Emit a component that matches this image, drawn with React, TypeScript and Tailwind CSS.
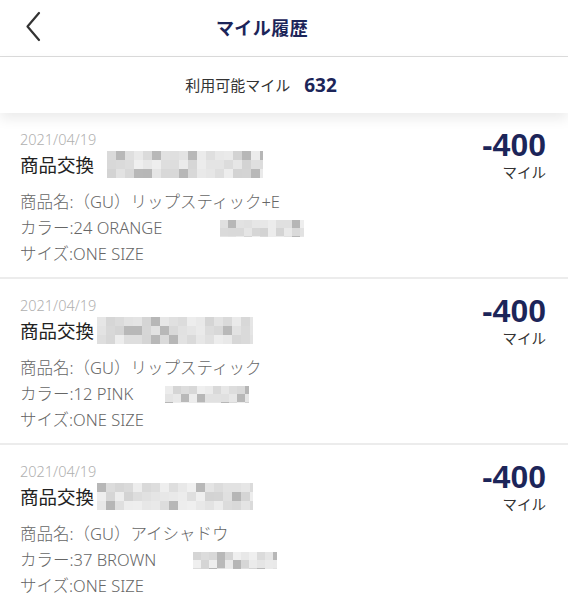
import React from "react";

const NAVY = "#1c2559";

const ITEMS = [
  {
    name: "商品名:（GU）リップスティック+E",
    color: "カラー:24 ORANGE",
    colorBlurX: 200,
    nameBlurX: 107,
    seed: 3,
  },
  {
    name: "商品名:（GU）リップスティック",
    color: "カラー:12 PINK",
    colorBlurX: 145,
    nameBlurX: 97,
    seed: 7,
  },
  {
    name: "商品名:（GU）アイシャドウ",
    color: "カラー:37 BROWN",
    colorBlurX: 173,
    nameBlurX: 97,
    seed: 11,
  },
];

// pixelated mosaic standing in for the redacted text
function Mosaic({ width, height, seed, cell = 9 }: { width: number; height: number; seed: number; cell?: number }) {
  const cols = Math.ceil(width / cell);
  const rows = Math.ceil(height / cell);
  const rects = [];
  let s = seed * 9301 + 49297;
  for (let r = 0; r < rows; r++) {
    for (let c = 0; c < cols; c++) {
      s = (s * 9301 + 49297) % 233280;
      const v = s / 233280;
      const g = Math.round(v > 0.85 ? 165 + v * 20 : 210 + v * 35);
      rects.push(
        <rect key={`${r}-${c}`} x={c * cell} y={r * cell} width={cell} height={cell} fill={`rgb(${g},${g},${g})`} />
      );
    }
  }
  return (
    <svg width={width} height={height} className="block" style={{ filter: "blur(0.6px)" }}>
      {rects}
    </svg>
  );
}

export default function App() {
  return (
    <div
      className="w-[568px] h-[600px] bg-white overflow-hidden"
      style={{ fontFamily: '"Noto Sans", "Noto Sans CJK JP", sans-serif' }}
    >
      {/* header */}
      <div className="relative h-[57px] flex items-center justify-center pr-[44px] border-b border-[#dcdcdc]">
        <svg className="absolute left-[24px] top-[11px]" width="20" height="31" viewBox="0 0 20 31" fill="none">
          <path d="M15 2 L3.5 15.5 L15 29" stroke="#333" strokeWidth="2.2" strokeLinecap="round" strokeLinejoin="round" />
        </svg>
        <h1 className="text-[18px] font-bold tracking-wide" style={{ color: NAVY }}>
          マイル履歴
        </h1>
      </div>

      {/* balance */}
      <div className="relative z-10 h-[56px] flex items-center justify-center pr-[46px] bg-white shadow-[0_6px_12px_rgba(0,0,0,0.08)]">
        <span className="text-[15px] text-[#333]">利用可能マイル</span>
        <span className="ml-[14px] text-[19px] font-bold" style={{ color: NAVY }}>
          632
        </span>
      </div>

      {/* history */}
      <div>
        {ITEMS.map((item, i) => (
          <div key={i} className="h-[166px] flex justify-between pl-[20px] pr-[20px] pt-[15px] border-b-2 border-[#ececec]">
            <div className="flex flex-col">
              <div className="text-[14.5px] leading-[22px] text-[#b0b0b0] font-light">2021/04/19</div>
              <div className="relative flex items-center h-[30px]">
                <span className="text-[18.5px] text-[#222]">商品交換</span>
                <div className="absolute top-[1px]" style={{ left: item.nameBlurX - 20 }}>
                  <Mosaic width={156} height={27} seed={item.seed} />
                </div>
              </div>
              <div className="mt-[9px] text-[16.5px] leading-[26px] text-[#666] font-light">
                <div>{item.name}</div>
                <div className="relative">
                  <span>{item.color}</span>
                  <div className="absolute top-[5px]" style={{ left: item.colorBlurX }}>
                    <Mosaic width={84} height={17} seed={item.seed + 5} cell={8} />
                  </div>
                </div>
                <div>サイズ:ONE SIZE</div>
              </div>
            </div>
            <div className="flex flex-col items-end pr-[2px]">
              <div
                className="text-[32px] font-bold leading-[33px] mt-[1px]"
                style={{ color: NAVY, fontFamily: '"Liberation Sans", sans-serif' }}
              >
                -400
              </div>
              <div className="text-[14.5px] text-[#333] leading-[18px] mt-[1px]">マイル</div>
            </div>
          </div>
        ))}
      </div>
    </div>
  );
}
